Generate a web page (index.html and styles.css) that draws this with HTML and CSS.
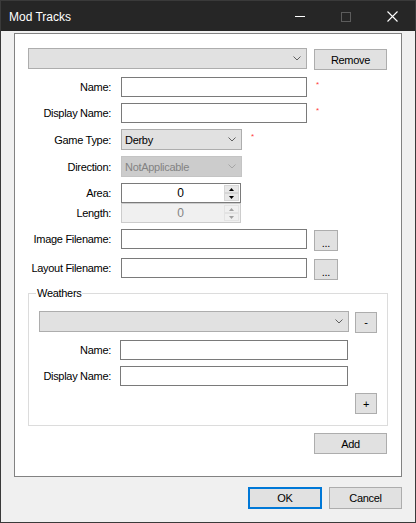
FILE: index.html
```html
<!DOCTYPE html>
<html>
<head>
<meta charset="utf-8">
<link rel="stylesheet" href="styles.css">
</head>
<body>
<div class="window">
  <div class="titlebar">
    <div class="title">Mod Tracks</div>
    <div class="tb-buttons">
      <div class="tb-btn"><div class="min-line"></div></div>
      <div class="tb-btn"><div class="max-box"></div></div>
      <div class="tb-btn">
        <svg width="11" height="11" viewBox="0 0 11 11"><path d="M0.5 0.5 L10.5 10.5 M10.5 0.5 L0.5 10.5" stroke="#ffffff" stroke-width="1.1" fill="none"/></svg>
      </div>
    </div>
  </div>
  <div class="client">
    <div class="panel">
      <div class="row-top">
        <div class="combo combo-top">
          <span class="combo-text"></span>
          <svg class="chev" width="8" height="5" viewBox="0 0 8 5"><polyline points="0.5,0.5 4,4 7.5,0.5" stroke="#606060" fill="none"/></svg>
        </div>
        <div class="btn btn-remove">Remove</div>
      </div>

      <div class="frow r-name">
        <div class="lbl">Name:</div>
        <div class="input input-wide"></div>
        <span class="req">*</span>
      </div>
      <div class="frow r-gap6">
        <div class="lbl">Display Name:</div>
        <div class="input input-wide"></div>
        <span class="req">*</span>
      </div>
      <div class="frow r-gap6">
        <div class="lbl">Game Type:</div>
        <div class="combo combo-small">
          <span class="combo-text">Derby</span>
          <svg class="chev" width="8" height="5" viewBox="0 0 8 5"><polyline points="0.5,0.5 4,4 7.5,0.5" stroke="#606060" fill="none"/></svg>
        </div>
        <span class="req">*</span>
      </div>
      <div class="frow r-gap6">
        <div class="lbl">Direction:</div>
        <div class="combo combo-small combo-disabled">
          <span class="combo-text">NotApplicable</span>
          <svg class="chev" width="8" height="5" viewBox="0 0 8 5"><polyline points="0.5,0.5 4,4 7.5,0.5" stroke="#a6a6a6" fill="none"/></svg>
        </div>
      </div>
      <div class="frow r-gap6">
        <div class="lbl">Area:</div>
        <div class="num">
          <span class="num-text">0</span>
          <div class="spin">
            <div class="spin-btn"><svg width="5" height="3" viewBox="0 0 5 3"><polygon points="2.5,0 5,3 0,3" fill="#000"/></svg></div>
            <div class="spin-btn"><svg width="5" height="3" viewBox="0 0 5 3"><polygon points="0,0 5,0 2.5,3" fill="#000"/></svg></div>
          </div>
        </div>
      </div>
      <div class="frow">
        <div class="lbl">Length:</div>
        <div class="num num-disabled">
          <span class="num-text">0</span>
          <div class="spin">
            <div class="spin-btn"><svg width="5" height="3" viewBox="0 0 5 3"><polygon points="2.5,0 5,3 0,3" fill="#a0a0a0"/></svg></div>
            <div class="spin-btn"><svg width="5" height="3" viewBox="0 0 5 3"><polygon points="0,0 5,0 2.5,3" fill="#a0a0a0"/></svg></div>
          </div>
        </div>
      </div>
      <div class="frow r-gap6">
        <div class="lbl">Image Filename:</div>
        <div class="input input-wide"></div>
        <div class="btn btn-dots">...</div>
      </div>
      <div class="frow r-gap9">
        <div class="lbl">Layout Filename:</div>
        <div class="input input-wide"></div>
        <div class="btn btn-dots">...</div>
      </div>

      <div class="group">
        <div class="legend">Weathers</div>
        <div class="g-top">
          <div class="combo combo-w">
            <span class="combo-text"></span>
            <svg class="chev" width="8" height="5" viewBox="0 0 8 5"><polyline points="0.5,0.5 4,4 7.5,0.5" stroke="#606060" fill="none"/></svg>
          </div>
          <div class="btn btn-sq btn-minus">-</div>
        </div>
        <div class="grow g-name">
          <div class="glbl">Name:</div>
          <div class="input input-g"></div>
        </div>
        <div class="grow g-disp">
          <div class="glbl">Display Name:</div>
          <div class="input input-g"></div>
        </div>
        <div class="g-plus-row">
          <div class="btn btn-sq">+</div>
        </div>
      </div>

      <div class="add-row">
        <div class="btn btn-add">Add</div>
      </div>
    </div>
    <div class="footer">
      <div class="btn btn-ok">OK</div>
      <div class="btn btn-cancel">Cancel</div>
    </div>
  </div>
</div>
</body>
</html>
```
FILE: styles.css
```css
* { box-sizing: border-box; }
html, body { margin: 0; padding: 0; background: #f0f0f0; }
body {
  font-family: "Liberation Sans", Arial, sans-serif;
  font-size: 11px;
  letter-spacing: -0.3px;
  color: #000;
}
.window {
  width: 416px;
  height: 523px;
  border: 1px solid #3a3a3a;
  background: #f0f0f0;
  display: flex;
  flex-direction: column;
}
.titlebar {
  height: 30px;
  background: #262626;
  display: flex;
  align-items: center;
  flex: none;
}
.title {
  color: #ffffff;
  font-size: 12px;
  letter-spacing: 0;
  padding-left: 8px;
  flex: 1;
  margin-top: 1px;
}
.tb-buttons { display: flex; height: 30px; }
.tb-btn {
  width: 46px;
  height: 30px;
  display: flex;
  align-items: center;
  justify-content: center;
}
.min-line { width: 10px; height: 1px; background: #ffffff; margin-top: 1px; }
.max-box { width: 10px; height: 10px; border: 1px solid #5c5c5c; margin-top: 1px; }

.client {
  flex: 1;
  padding: 2px 13px 0 13px;
}
.panel {
  width: 388px;
  height: 444px;
  border: 1px solid #828282;
  background: #ffffff;
  padding-top: 14px;
}
.row-top {
  display: flex;
  padding-left: 13px;
  align-items: flex-start;
}
.combo {
  height: 21px;
  background: #e1e1e1;
  border: 1px solid #adadad;
  display: flex;
  align-items: center;
  flex: none;
}
.combo-text { padding-left: 3px; flex: 1; }
.chev { margin-right: 5px; flex: none; }
.combo-top { width: 279px; }
.combo-small { width: 121px; }
.combo-disabled { background: #cccccc; border-color: #c4c4c4; color: #838383; }
.combo-w { width: 310px; }

.btn {
  background: #e1e1e1;
  border: 1px solid #adadad;
  display: flex;
  align-items: center;
  justify-content: center;
  height: 21px;
  flex: none;
}
.btn-remove { width: 73px; margin-left: 7px; margin-top: 1px; margin-bottom: -1px; }
.btn-dots {
  width: 24px;
  margin-left: 7px;
  margin-top: 1px;
  margin-bottom: -2px;
  align-self: flex-start;
  padding-top: 4px;
}

.frow {
  display: flex;
  align-items: center;
}
.r-name { margin-top: 8px; }
.r-gap6 { margin-top: 6px; }
.r-gap9 { margin-top: 9px; }
.lbl {
  width: 96px;
  text-align: right;
  flex: none;
  margin-right: 10px;
}
.input {
  height: 20px;
  background: #ffffff;
  border: 1px solid #7a7a7a;
  flex: none;
}
.input-wide { width: 186px; }
.req {
  color: #ff3b3b;
  font-size: 8px;
  line-height: 8px;
  align-self: flex-start;
  margin-left: 9px;
  margin-top: 4px;
}

.num {
  width: 120px;
  height: 20px;
  border: 1px solid #7a7a7a;
  background: #ffffff;
  display: flex;
  align-items: stretch;
  padding: 1px;
  flex: none;
}
.num-text {
  flex: 1;
  text-align: center;
  font-size: 12px;
  line-height: 16px;
  padding-left: 14px;
}
.spin {
  width: 15px;
  display: flex;
  flex-direction: column;
}
.spin-btn {
  flex: 1;
  background: #e8e8e8;
  border: 1px solid #d6d6d6;
  display: flex;
  align-items: center;
  justify-content: center;
}
.num-disabled { background: #f0f0f0; border-color: #cccccc; color: #838383; }
.num-disabled .spin-btn { background: #f0f0f0; border-color: #e3e3e3; }

.group {
  position: relative;
  margin: 15px 0 0 13px;
  width: 360px;
  height: 133px;
  border: 1px solid #dcdcdc;
  padding: 17px 0 0 10px;
}
.legend {
  position: absolute;
  top: -8px;
  left: 7px;
  background: #ffffff;
  padding: 0 1px;
  line-height: 14px;
  font-size: 11px;
}
.g-top { display: flex; align-items: flex-start; }
.btn-sq { width: 22px; margin-left: 6px; height: 21px; }
.g-top .btn-sq { margin-top: 1px; margin-bottom: -1px; }
.btn-minus { padding-bottom: 2px; }
.grow { display: flex; align-items: center; margin-left: -10px; }
.g-name { margin-top: 8px; }
.g-disp { margin-top: 6px; }
.glbl { width: 82px; text-align: right; margin-right: 9px; flex: none; }
.input-g { width: 228px; }
.g-plus-row { margin-top: 7px; padding-left: 316px; display: flex; }
.g-plus-row .btn-sq { margin: 0; }

.add-row {
  display: flex;
  padding-left: 299px;
  margin-top: 7px;
}
.btn-add { width: 73px; }

.footer {
  display: flex;
  justify-content: flex-end;
  margin-top: 10px;
}
.btn-ok {
  width: 74px;
  height: 22px;
  border: 2px solid #0078d7;
}
.btn-cancel {
  width: 73px;
  height: 22px;
  margin-left: 7px;
}
```
